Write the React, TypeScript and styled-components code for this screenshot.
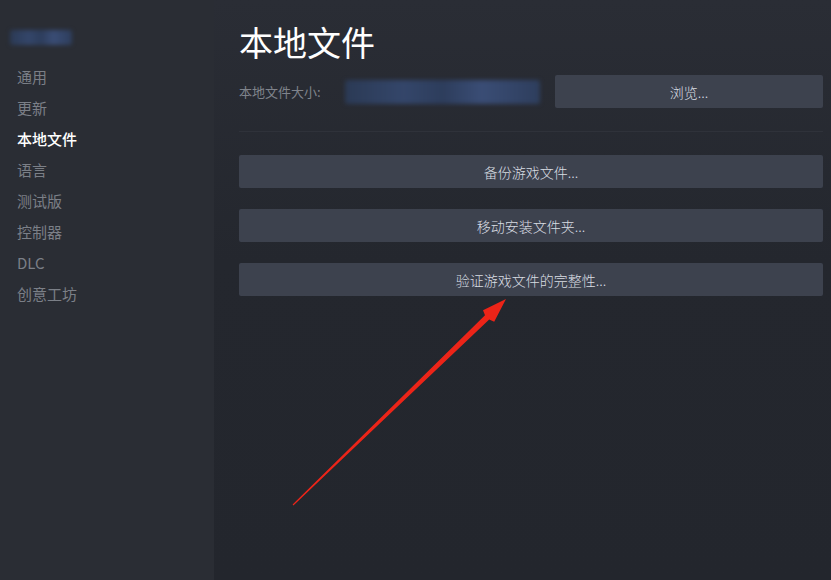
import * as React from "react";
import styled, { createGlobalStyle } from "styled-components";

const GlobalStyle = createGlobalStyle`
  html, body {
    margin: 0;
    padding: 0;
    background: #23262d;
  }
  body {
    font-family: "Noto Sans CJK SC", "Noto Sans", sans-serif;
  }
`;

const Page = styled.div`
  display: flex;
  width: 831px;
  height: 580px;
  overflow: hidden;
  position: relative;
`;

const Sidebar = styled.nav`
  width: 214px;
  flex-shrink: 0;
  background: #2a2d34;
  padding: 30px 0 0 17px;
  box-sizing: border-box;
  display: flex;
  flex-direction: column;
`;

const Blur = styled.div<{ $w: number; $h: number }>`
  width: ${(p) => p.$w}px;
  height: ${(p) => p.$h}px;
  background: linear-gradient(
    90deg,
    #2b3a55 0%,
    #34466a 30%,
    #2d3d5c 50%,
    #3a4d75 70%,
    #2e3e5d 100%
  );
  filter: blur(2px);
  border-radius: 3px;
`;

const UserBlur = styled(Blur)`
  margin-left: -7px;
  margin-bottom: 16px;
`;

const NavItem = styled.div<{ $active?: boolean }>`
  height: 31px;
  line-height: 31px;
  font-size: 15px;
  color: ${(p) => (p.$active ? "#ffffff" : "#7b7f87")};
  font-weight: ${(p) => (p.$active ? 500 : 400)};
`;

const Main = styled.main`
  flex: 1;
  padding: 20px 8px 0 25px;
  background: linear-gradient(180deg, #2a2d35 0%, #24272e 45%, #23262d 100%);
  display: flex;
  flex-direction: column;
`;

const Title = styled.h1`
  margin: 0;
  font-size: 34px;
  font-weight: 400;
  color: #ffffff;
  line-height: 44px;
`;

const SizeRow = styled.div`
  display: flex;
  align-items: center;
  margin-top: 11px;
  padding-bottom: 23px;
  border-bottom: 1px solid #2f323a;
`;

const SizeLabel = styled.span`
  font-size: 13px;
  color: #7f838b;
  width: 106px;
`;

const SizeBlur = styled(Blur)`
  margin-right: 15px;
`;

const Button = styled.button<{ $grow?: boolean }>`
  flex: ${(p) => (p.$grow ? 1 : "none")};
  height: 33px;
  border: none;
  border-radius: 2px;
  background: #3d424e;
  color: #d9dde3;
  font-family: "Noto Sans CJK SC", "Noto Sans", sans-serif;
  font-size: 14px;
  font-weight: 300;
  cursor: pointer;
  padding: 0;
`;

const Actions = styled.div`
  display: flex;
  flex-direction: column;
  gap: 21px;
  margin-top: 23px;
`;

const Arrow = styled.svg`
  position: absolute;
  left: 0;
  top: 0;
  pointer-events: none;
`;

const navItems = ["通用", "更新", "本地文件", "语言", "测试版", "控制器", "DLC", "创意工坊"];
const actions = ["备份游戏文件...", "移动安装文件夹...", "验证游戏文件的完整性..."];

export default function App() {
  return (
    <Page>
      <GlobalStyle />
      <Sidebar>
        <UserBlur $w={62} $h={15} />
        {navItems.map((n) => (
          <NavItem key={n} $active={n === "本地文件"}>
            {n}
          </NavItem>
        ))}
      </Sidebar>
      <Main>
        <Title>本地文件</Title>
        <SizeRow>
          <SizeLabel>本地文件大小:</SizeLabel>
          <SizeBlur $w={195} $h={24} />
          <Button $grow>浏览...</Button>
        </SizeRow>
        <Actions>
          {actions.map((a) => (
            <Button key={a}>{a}</Button>
          ))}
        </Actions>
      </Main>
      <Arrow width="831" height="580" viewBox="0 0 831 580">
        <path
          d="M292.6 504.6 L485 315.2 L483 310.2 L506 299 L494.2 321.8 L489.2 319.6 L293.4 505.4 Z"
          fill="#ec2418"
        />
      </Arrow>
    </Page>
  );
}
